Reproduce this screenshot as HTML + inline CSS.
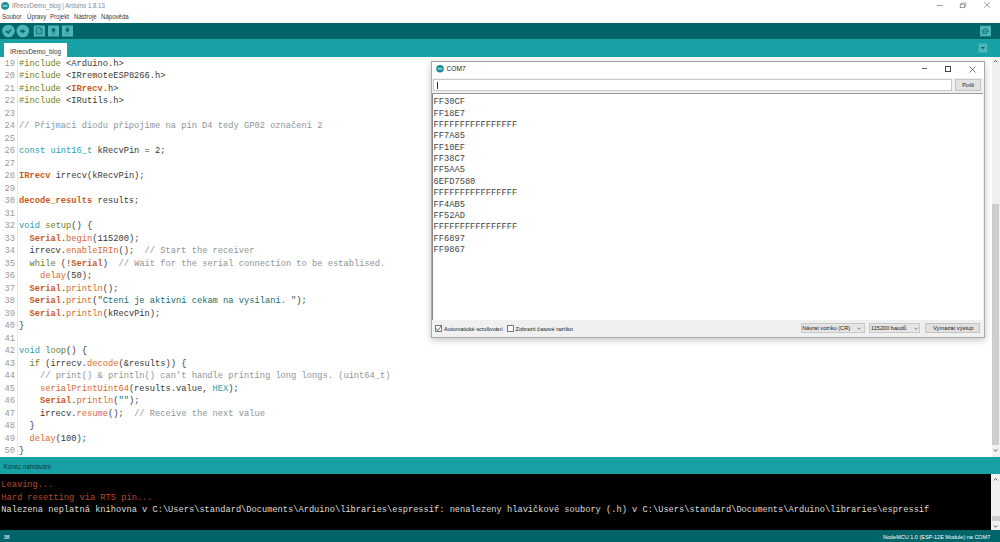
<!DOCTYPE html>
<html><head><meta charset="utf-8">
<style>
*{margin:0;padding:0;box-sizing:border-box}
html,body{width:1000px;height:542px;overflow:hidden;background:#fff;position:relative;font-family:"Liberation Sans",sans-serif}
.a{position:absolute}
.t{position:absolute;white-space:pre;line-height:1}
.mono{font-family:"Liberation Mono",monospace}
#code .ln{position:absolute;left:0;width:15px;text-align:right;color:#999;white-space:pre}
#code .cl{position:absolute;left:19px;white-space:pre;color:#383838}
.pp{color:#6f7d25}
.kw{color:#2aa2a6}
.fn{color:#d8682e}
.cls{color:#c95a22;font-weight:bold}
.cm{color:#8c9596}
.st{color:#206a6d}
.lit{color:#6f7d25}
</style></head><body>
<!-- title bar -->
<div class="a" style="left:0;top:0;width:1000px;height:22px;background:#fff"></div>
<svg class="a" style="left:0;top:0" width="11" height="12" viewBox="0 0 11 12"><circle cx="5.1" cy="5.85" r="3.95" fill="#1a8f93"/><path d="M2.9 5.85C2.9 4.9 4.1 4.9 5.1 5.85C6.1 6.8 7.3 6.8 7.3 5.85C7.3 4.9 6.1 4.9 5.1 5.85C4.1 6.8 2.9 6.8 2.9 5.85Z" fill="none" stroke="#a8e8ec" stroke-width="0.9"/></svg>
<div class="t" style="left:12px;top:3px;font-size:6.3px;color:#888;transform:scaleX(0.965);transform-origin:0 0">IRrecvDemo_blog | Arduino 1.8.13</div>
<div class="t" style="left:2px;top:13.5px;font-size:6.7px;color:#3a3a3a;transform:scaleX(0.91);transform-origin:0 0">Soubor</div>
<div class="t" style="left:27px;top:13.5px;font-size:6.7px;color:#3a3a3a;transform:scaleX(0.91);transform-origin:0 0">Úpravy</div>
<div class="t" style="left:49.5px;top:13.5px;font-size:6.7px;color:#3a3a3a;transform:scaleX(0.91);transform-origin:0 0">Projekt</div>
<div class="t" style="left:73.8px;top:13.5px;font-size:6.7px;color:#3a3a3a;transform:scaleX(0.91);transform-origin:0 0">Nástroje</div>
<div class="t" style="left:100.8px;top:13.5px;font-size:6.7px;color:#3a3a3a;transform:scaleX(0.91);transform-origin:0 0">Nápověda</div>

<svg class="a" style="left:930px;top:0" width="70" height="14" viewBox="930 0 70 14">
<path d="M936.6 5.5H943" stroke="#777" stroke-width="0.7"/>
<rect x="960.2" y="4.2" width="4.4" height="3.5" fill="none" stroke="#777" stroke-width="0.7"/>
<path d="M961.4 4.2V3H965.9V6.6H964.6" fill="none" stroke="#777" stroke-width="0.6"/>
<path d="M984.2 2.1L990 7.7M990 2.1L984.2 7.7" stroke="#777" stroke-width="0.7"/>
</svg>
<!-- toolbar -->
<div class="a" style="left:0;top:22.5px;width:1000px;height:16.5px;background:#006468"></div>
<svg class="a" style="left:0;top:22.1px" width="80" height="17" viewBox="0 22.5 80 17">
<circle cx="8.5" cy="31.5" r="6.3" fill="#4DB6B9"/>
<path d="M6 31.4L8.2 33.5L11.1 29.9" fill="none" stroke="#006468" stroke-width="1.5"/>
<circle cx="22.8" cy="31.5" r="6.3" fill="#4DB6B9"/>
<path d="M20.2 31.7H23.2" stroke="#006468" stroke-width="1.9"/>
<path d="M22.2 29.4L25.5 31.7L22.2 34Z" fill="#006468"/>
<rect x="33.8" y="26" width="11.1" height="11" fill="#4DB6B9"/>
<path d="M36.4 28.2H40.3L42 29.9V34.4H36.4Z" fill="none" stroke="#006468" stroke-width="0.8"/>
<path d="M40.2 28.2V30H42" fill="none" stroke="#006468" stroke-width="0.7"/>
<path d="M37.4 30.5H39.5M37.4 31.7H41M37.4 32.9H41" stroke="#2a8589" stroke-width="0.5"/>
<rect x="48" y="26" width="11" height="11" fill="#4DB6B9"/>
<path d="M50.8 31L53.5 27.9L56.2 31Z" fill="#006468"/>
<rect x="52.5" y="30.6" width="2" height="2.4" fill="#006468"/>
<rect x="50.8" y="34" width="5.4" height="0.7" fill="#2a8a8d"/>
<rect x="61.9" y="26" width="11.1" height="11" fill="#4DB6B9"/>
<rect x="66.4" y="27.8" width="2" height="2.4" fill="#006468"/>
<path d="M64.7 30L70.1 30L67.4 33.1Z" fill="#006468"/>
<rect x="64.7" y="34" width="5.4" height="0.7" fill="#2a8a8d"/>
</svg>
<svg class="a" style="left:978px;top:24px" width="15" height="14" viewBox="978 24 15 14">
<rect x="980.1" y="25.8" width="10.9" height="10.5" fill="#4DB6B9"/>
<circle cx="985.3" cy="31.2" r="2.3" fill="none" stroke="#006468" stroke-width="0.9"/>
<circle cx="985.3" cy="31.2" r="0.7" fill="#006468"/>
<path d="M981.8 31.2H983M987.6 31.2H989M983.6 32.9L982.2 34.4" stroke="#006468" stroke-width="0.8"/>
</svg>
<!-- tab bar -->
<div class="a" style="left:0;top:39px;width:1000px;height:18px;background:#17A1A5"></div>
<div class="a" style="left:4px;top:42.6px;width:63px;height:14.4px;background:#fff"></div>
<div class="t" style="left:10px;top:48.6px;font-size:6.4px;color:#3a3a3a">IRrecvDemo_blog</div>
<svg class="a" style="left:978px;top:43px" width="10" height="10" viewBox="978 43 10 10"><rect x="978.5" y="43.5" width="8.7" height="9.1" fill="#4DB6B9"/><path d="M980.9 46.9H984.9L982.9 49.3Z" fill="#006468"/></svg>

<!-- editor -->
<div id="code" class="mono" style="position:absolute;left:0;top:57px;width:991px;height:399.5px;background:#fff;font-size:8.72px;line-height:12.5px">
<div class="a" style="left:17px;top:0;width:1px;height:400px;background:#e8e8e8"></div>
<!--CODE-->
<div class="ln" style="top:0.90px">19</div>
<div class="cl" style="top:0.90px"><span class="pp">#include</span> &lt;Arduino.h&gt;</div>
<div class="ln" style="top:13.40px">20</div>
<div class="cl" style="top:13.40px"><span class="pp">#include</span> &lt;IRremoteESP8266.h&gt;</div>
<div class="ln" style="top:25.90px">21</div>
<div class="cl" style="top:25.90px"><span class="pp">#include</span> &lt;<span class="cls">IRrecv</span>.h&gt;</div>
<div class="ln" style="top:38.40px">22</div>
<div class="cl" style="top:38.40px"><span class="pp">#include</span> &lt;IRutils.h&gt;</div>
<div class="ln" style="top:50.90px">23</div>
<div class="ln" style="top:63.40px">24</div>
<div class="cl" style="top:63.40px"><span class="cm">// Přijmaci diodu připojime na pin D4 tedy GP02 označeni 2</span></div>
<div class="ln" style="top:75.90px">25</div>
<div class="ln" style="top:88.40px">26</div>
<div class="cl" style="top:88.40px"><span class="kw">const</span> <span class="kw">uint16_t</span> kRecvPin = 2;</div>
<div class="ln" style="top:100.90px">27</div>
<div class="ln" style="top:113.40px">28</div>
<div class="cl" style="top:113.40px"><span class="cls">IRrecv</span> irrecv(kRecvPin);</div>
<div class="ln" style="top:125.90px">29</div>
<div class="ln" style="top:138.40px">30</div>
<div class="cl" style="top:138.40px"><span class="cls">decode_results</span> results;</div>
<div class="ln" style="top:150.90px">31</div>
<div class="ln" style="top:163.40px">32</div>
<div class="cl" style="top:163.40px"><span class="kw">void</span> <span class="lit">setup</span>() {</div>
<div class="ln" style="top:175.90px">33</div>
<div class="cl" style="top:175.90px">  <span class="cls">Serial</span>.<span class="fn">begin</span>(115200);</div>
<div class="ln" style="top:188.40px">34</div>
<div class="cl" style="top:188.40px">  irrecv.<span class="fn">enableIRIn</span>();  <span class="cm">// Start the receiver</span></div>
<div class="ln" style="top:200.90px">35</div>
<div class="cl" style="top:200.90px">  <span class="lit">while</span> (!<span class="cls">Serial</span>)  <span class="cm">// Wait for the serial connection to be establised.</span></div>
<div class="ln" style="top:213.40px">36</div>
<div class="cl" style="top:213.40px">    <span class="fn">delay</span>(50);</div>
<div class="ln" style="top:225.90px">37</div>
<div class="cl" style="top:225.90px">  <span class="cls">Serial</span>.<span class="fn">println</span>();</div>
<div class="ln" style="top:238.40px">38</div>
<div class="cl" style="top:238.40px">  <span class="cls">Serial</span>.<span class="fn">print</span>(<span class="st">&quot;Cteni je aktivni cekam na vysilani. &quot;</span>);</div>
<div class="ln" style="top:250.90px">39</div>
<div class="cl" style="top:250.90px">  <span class="cls">Serial</span>.<span class="fn">println</span>(kRecvPin);</div>
<div class="ln" style="top:263.40px">40</div>
<div class="cl" style="top:263.40px">}</div>
<div class="ln" style="top:275.90px">41</div>
<div class="ln" style="top:288.40px">42</div>
<div class="cl" style="top:288.40px"><span class="kw">void</span> <span class="lit">loop</span>() {</div>
<div class="ln" style="top:300.90px">43</div>
<div class="cl" style="top:300.90px">  <span class="lit">if</span> (irrecv.<span class="fn">decode</span>(&amp;results)) {</div>
<div class="ln" style="top:313.40px">44</div>
<div class="cl" style="top:313.40px">    <span class="cm">// print() &amp; println() can&#x27;t handle printing long longs. (uint64_t)</span></div>
<div class="ln" style="top:325.90px">45</div>
<div class="cl" style="top:325.90px">    <span class="fn">serialPrintUint64</span>(results.value, <span class="kw">HEX</span>);</div>
<div class="ln" style="top:338.40px">46</div>
<div class="cl" style="top:338.40px">    <span class="cls">Serial</span>.<span class="fn">println</span>(<span class="st">&quot;&quot;</span>);</div>
<div class="ln" style="top:350.90px">47</div>
<div class="cl" style="top:350.90px">    irrecv.<span class="fn">resume</span>();  <span class="cm">// Receive the next value</span></div>
<div class="ln" style="top:363.40px">48</div>
<div class="cl" style="top:363.40px">  }</div>
<div class="ln" style="top:375.90px">49</div>
<div class="cl" style="top:375.90px">  <span class="fn">delay</span>(100);</div>
<div class="ln" style="top:388.40px">50</div>
<div class="cl" style="top:388.40px">}</div>
<!--/CODE-->
</div>

<!-- editor scrollbar -->
<div class="a" style="left:991.5px;top:57px;width:8.5px;height:399.5px;background:#f0f0f0"></div>
<div class="a" style="left:992px;top:203.5px;width:7px;height:241px;background:#cdcdcd"></div>
<svg class="a" style="left:990px;top:57px" width="10" height="400" viewBox="990 57 10 400"><path d="M993.8 62.4L995.5 60.4L997.3 62.4" fill="none" stroke="#555" stroke-width="0.9"/><path d="M993.8 449.4L995.5 451.4L997.3 449.4" fill="none" stroke="#555" stroke-width="0.9"/></svg>

<!-- message bar -->
<div class="a" style="left:0;top:456.5px;width:1000px;height:17.5px;background:#17A1A5"></div>
<div class="t" style="left:3.4px;top:464px;font-size:6.3px;color:#0b3c3e">Konec nahrávání</div>

<!-- console -->
<div class="a mono" style="left:0;top:474px;width:991px;height:56.3px;background:#000;font-size:8.70px;line-height:12.5px">
<div class="t" style="left:1.3px;top:5px;line-height:12.5px;color:#b84a26">Leaving...</div>
<div class="t" style="left:1.3px;top:17.6px;line-height:12.5px;color:#b84a26">Hard resetting via RTS pin...</div>
<div class="t" style="left:1.3px;top:30.4px;line-height:12.5px;color:#dcdcdc">Nalezena neplatná knihovna v C:\Users\standard\Documents\Arduino\libraries\espressif: nenalezeny hlavičkové soubory (.h) v C:\Users\standard\Documents\Arduino\libraries\espressif</div>
</div>
<div class="a" style="left:991px;top:474px;width:9px;height:56.3px;background:#f0f0f0"></div>
<div class="a" style="left:992px;top:515.8px;width:8px;height:5.3px;background:#cdcdcd"></div>
<svg class="a" style="left:990px;top:474px" width="10" height="57" viewBox="990 474 10 57"><path d="M993.8 480.4L995.5 478.5L997.3 480.4" fill="none" stroke="#555" stroke-width="0.9"/><path d="M993.8 525.4L995.5 527.3L997.3 525.4" fill="none" stroke="#555" stroke-width="0.9"/></svg>

<!-- footer -->
<div class="a" style="left:0;top:530.3px;width:1000px;height:11.7px;background:#006468"></div>
<div class="t" style="left:3.4px;top:534.8px;font-size:5.5px;color:#fff">38</div>
<div class="t" style="left:883px;top:534.8px;font-size:5.5px;color:#fff">NodeMCU 1.0 (ESP-12E Module) na COM7</div>

<!-- serial monitor -->
<div class="a" style="left:430.5px;top:61px;width:554.5px;height:277px;background:#f0f0f0;border:1px solid #a8a8a8;box-shadow:0 2px 7px rgba(0,0,0,.24)"></div>
<div class="a" style="left:431.5px;top:62px;width:552.5px;height:15.5px;background:#fff"></div>
<svg class="a" style="left:435px;top:64px" width="10" height="10" viewBox="435 64 10 10"><circle cx="440" cy="68.8" r="3.8" fill="#168e92"/><path d="M437.9 68.8C437.9 67.9 439 67.9 440 68.8C441 69.7 442.1 69.7 442.1 68.8C442.1 67.9 441 67.9 440 68.8C439 69.7 437.9 69.7 437.9 68.8Z" fill="none" stroke="#b8eef0" stroke-width="0.8"/></svg>
<div class="t" style="left:446.6px;top:65.6px;font-size:6.6px;color:#222">COM7</div>
<div class="a" style="left:921.8px;top:68.4px;width:5.4px;height:0.7px;background:#666"></div>
<div class="a" style="left:945px;top:66px;width:6px;height:5.6px;border:0.7px solid #444"></div>
<svg class="a" style="left:968.5px;top:65.8px" width="7" height="7" viewBox="0 0 7 7"><path d="M0.5 0.5L6.5 6.5M6.5 0.5L0.5 6.5" stroke="#444" stroke-width="0.7"/></svg>
<div class="a" style="left:433.3px;top:79.2px;width:518.5px;height:11.9px;background:#fff;border:1px solid #c8c8c8"></div>
<div class="a" style="left:436.8px;top:81.5px;width:0.8px;height:7px;background:#333"></div>
<div class="a" style="left:954.6px;top:79.4px;width:26.3px;height:11.7px;background:#e1e1e1;border:1px solid #c4c4c4"></div>
<div class="t" style="left:954.6px;top:82px;width:26.3px;text-align:center;font-size:6.1px;color:#222;transform:scaleX(0.9)">Pošli</div>
<div class="a mono" style="left:431.7px;top:93px;width:551.5px;height:227.3px;background:#fff;border-left:1px solid #8a8a8a;border-top:1px solid #9a9a9a;font-size:8.72px;color:#444">
<div class="t" style="left:0.8px;top:4.30px">FF30CF</div>
<div class="t" style="left:0.8px;top:15.66px">FF18E7</div>
<div class="t" style="left:0.8px;top:27.02px">FFFFFFFFFFFFFFFF</div>
<div class="t" style="left:0.8px;top:38.38px">FF7A85</div>
<div class="t" style="left:0.8px;top:49.74px">FF10EF</div>
<div class="t" style="left:0.8px;top:61.10px">FF38C7</div>
<div class="t" style="left:0.8px;top:72.46px">FF5AA5</div>
<div class="t" style="left:0.8px;top:83.82px">6EFD7580</div>
<div class="t" style="left:0.8px;top:95.18px">FFFFFFFFFFFFFFFF</div>
<div class="t" style="left:0.8px;top:106.54px">FF4AB5</div>
<div class="t" style="left:0.8px;top:117.90px">FF52AD</div>
<div class="t" style="left:0.8px;top:129.26px">FFFFFFFFFFFFFFFF</div>
<div class="t" style="left:0.8px;top:140.62px">FF6897</div>
<div class="t" style="left:0.8px;top:151.98px">FF9867</div>
</div>
<div class="a" style="left:435.1px;top:325.1px;width:6.7px;height:7px;background:#fff;border:0.8px solid #777"></div>
<svg class="a" style="left:435.1px;top:325.1px" width="7" height="7" viewBox="0 0 7 7"><path d="M1.2 3.5L2.8 5.6L6.2 0.9" fill="none" stroke="#444" stroke-width="0.8"/></svg>
<div class="t" style="left:444.1px;top:326.8px;font-size:5.56px;color:#222">Automatické scrollování</div>
<div class="a" style="left:507.3px;top:325.1px;width:6.6px;height:7px;background:#fff;border:0.8px solid #777"></div>
<div class="t" style="left:515.6px;top:326.8px;font-size:5.54px;color:#222">Zobrazit časové razítko</div>
<div class="a" style="left:800.5px;top:323.2px;width:64.1px;height:10.3px;background:#e5e5e5;border:0.8px solid #c8c8c8"></div>
<div class="t" style="left:802.2px;top:326.4px;font-size:5.65px;color:#222">Návrat vozíku (CR)</div>
<svg class="a" style="left:857.4px;top:327px" width="4" height="3" viewBox="0 0 4 3"><path d="M0.3 0.6L2 2.3L3.7 0.6" fill="none" stroke="#444" stroke-width="0.6"/></svg>
<div class="a" style="left:868.7px;top:323.2px;width:51.7px;height:10.3px;background:#e5e5e5;border:0.8px solid #c8c8c8"></div>
<div class="t" style="left:871px;top:326.4px;font-size:5.6px;color:#222">115200 baudů</div>
<svg class="a" style="left:913.9px;top:327px" width="4" height="3" viewBox="0 0 4 3"><path d="M0.3 0.6L2 2.3L3.7 0.6" fill="none" stroke="#444" stroke-width="0.6"/></svg>
<div class="a" style="left:925.3px;top:323.2px;width:55px;height:10.3px;background:#e1e1e1;border:0.8px solid #c4c4c4"></div>
<div class="t" style="left:933px;top:326.4px;font-size:5.75px;color:#222">Vymazat výstup</div>

</body></html>
